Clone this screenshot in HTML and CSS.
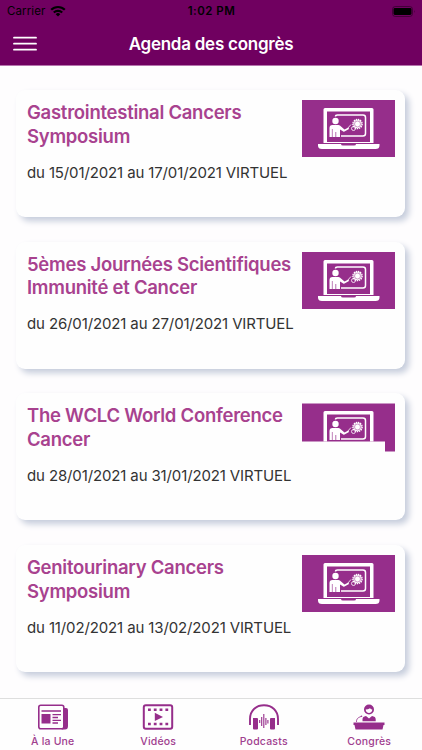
FILE: index.html
```
<!DOCTYPE html>
<html lang="fr">
  <head>
    <title>Agenda des congrès</title>
    <meta charset="UTF-8">
    <link rel="stylesheet" href="styles.css">
  </head>
  <body>
    <!-- shared laptop picture -->
    <svg class="sprite" width="0" height="0">
      <symbol id="laptop" viewBox="0 0 93 57">
        <path fill="#fff" fill-rule="evenodd" d="M23 8h47q1.500 0 1.500 1.500V43h-50V9.500Q21.500 8 23 8zM25 11.500V42h43V11.500z"/>
        <path fill="#fff" d="M16 44h23q0 1.500 2 1.500h11q2 0 2-1.500h23.500v1.500q0 3.500-4 3.500h-53.500Q16 49 16 45.500z"/>
        <path fill="none" stroke="#fff" stroke-width="1.500" d="M33.500 16.500q0-1.500 2-1.500H61q2.500 0 2.500 2.500v16q0 2.500-2.500 2.500H39"/>
        <circle cx="33.500" cy="21" r="3.200" fill="#fff"/>
        <path fill="#fff" d="M30.500 25h6q1.500 0 2.500 1.500l3.500 3 4-2 .5 1.500-4.500 2.500q-1 .5-2-.5L38 29.500v7.500h-3.800V32h-.7v5h-3V29h-.6v8H27.500V28q0-3 3-3z"/>
        <path stroke="#fff" stroke-width=".8" d="M45 29l4-4.500"/>
        <circle cx="55.500" cy="24" r="4.200" fill="#fff"/>
        <circle cx="55.500" cy="24" r="4.700" fill="none" stroke="#fff" stroke-width="1.200" stroke-dasharray="1.400 .8"/>
        <circle cx="55.500" cy="24" r="3" fill="none" stroke="#962e8b" stroke-width=".5"/>
        <circle cx="51.500" cy="28.500" r="2" fill="none" stroke="#fff" stroke-width=".8"/>
      </symbol>
    </svg>

    <header>
      <div class="statusBar">
        <div class="carrier">
          <span>Carrier</span>
          <svg width="16" height="12" viewBox="0 0 16 12">
            <path fill="none" stroke="#000" stroke-width="2.200" d="M1.200 4.800a9.600 9.600 0 0 1 13.600 0M3.800 7.500a6 6 0 0 1 8.400 0"/>
            <path d="M8 11.500L5.700 9.200a3.300 3.300 0 0 1 4.600 0z"/>
          </svg>
        </div>
        <div class="time">1:02 PM</div>
        <svg class="battery" width="24" height="11" viewBox="0 0 24 11">
          <rect x=".5" y=".5" width="20" height="10" rx="2.800" fill="none" stroke="#000" stroke-opacity=".4"/>
          <rect x="1.500" y="2" width="18" height="7" rx="1.400"/>
          <path fill-opacity=".4" d="M22 4q1.500 1.500 0 3z"/>
        </svg>
      </div>
      <div class="navBar">
        <svg class="menu" width="24" height="16" viewBox="0 0 24 16">
          <path stroke="#fff" stroke-width="1.800" stroke-linecap="round" d="M1 1.700h22M1 7.700h22M1 13.700h22"/>
        </svg>
        <h1>Agenda des congrès</h1>
      </div>
    </header>

    <main class="agenda">
      <article class="card">
        <div class="cardText">
          <h2>Gastrointestinal Cancers<br>Symposium</h2>
          <p>du 15/01/2021 au 17/01/2021 VIRTUEL</p>
        </div>
        <svg class="picture" width="93" height="57"><use href="#laptop"/></svg>
      </article>

      <article class="card">
        <div class="cardText">
          <h2>5èmes Journées Scientifiques<br>Immunité et Cancer</h2>
          <p>du 26/01/2021 au 27/01/2021 VIRTUEL</p>
        </div>
        <svg class="picture" width="93" height="57"><use href="#laptop"/></svg>
      </article>

      <article class="card">
        <div class="cardText">
          <h2>The WCLC World Conference<br>Cancer</h2>
          <p>du 28/01/2021 au 31/01/2021 VIRTUEL</p>
        </div>
        <svg class="picture cut" width="93" height="57"><use href="#laptop"/></svg>
      </article>

      <article class="card">
        <div class="cardText">
          <h2>Genitourinary Cancers<br>Symposium</h2>
          <p>du 11/02/2021 au 13/02/2021 VIRTUEL</p>
        </div>
        <svg class="picture" width="93" height="57"><use href="#laptop"/></svg>
      </article>
    </main>

    <nav class="tabBar">
      <a class="tab">
        <svg width="32" height="26" viewBox="0 0 32 26">
          <rect x="1.800" y="1.300" width="25" height="23.400" rx="2" fill="none" stroke="#962e8b" stroke-width="1.600"/>
          <path fill="#962e8b" d="M27 4h2q2 0 2 2v16q0 3.500-3 3.500h-4q3-1 3-4z"/>
          <path fill="#962e8b" d="M4.500 10h9v9.500h-9z"/>
          <path stroke="#962e8b" stroke-width="1.300" d="M4.500 7H24M15.500 10.700H24M15.500 13.500h5.500M15.500 16.300H24M15.500 19h5.500"/>
        </svg>
        <span>À la Une</span>
      </a>
      <a class="tab">
        <svg width="32" height="26" viewBox="0 0 32 26">
          <rect x="1.800" y="1.300" width="28.400" height="23.400" rx="2" fill="none" stroke="#962e8b" stroke-width="2"/>
          <path stroke="#962e8b" stroke-width="2.500" stroke-dasharray="2.800 3" d="M6 5.800h21M6 20h21"/>
          <path fill="#962e8b" d="M12.800 8.700l8.200 4.200-8.200 4.200z"/>
        </svg>
        <span>Vidéos</span>
      </a>
      <a class="tab">
        <svg width="32" height="26" viewBox="0 0 32 26">
          <path fill="none" stroke="#962e8b" stroke-width="1.900" d="M2 21v-6C2 6.500 8 1.300 16 1.300S30 6.500 30 15v6"/>
          <path fill="#962e8b" d="M5 14h4q1 0 1 1v9.500q0 1-1 1H6q-1 0-1-1zM27 14h-4q-1 0-1 1v9.500q0 1 1 1h3q1 0 1-1z"/>
          <path stroke="#962e8b" stroke-width="1.100" d="M11.700 16v3M13.700 13v9M15.800 10v14M17.900 14v7M19.900 16v3.500"/>
        </svg>
        <span>Podcasts</span>
      </a>
      <a class="tab">
        <svg width="32" height="26" viewBox="0 0 32 26">
          <circle cx="16" cy="5.500" r="5" fill="#962e8b"/>
          <path fill="#fff" d="M12.700 5.500q2.500 0 4.300-1.200 1 1.200 2.300 1.200c0 4.500-6.600 4.500-6.600 0z"/>
          <path fill="#962e8b" d="M9.500 17.300v-2q0-2.800 3.500-3.300l3 2.500 3-2.500q3.700.5 3.700 3.300v2z"/>
          <path fill="none" stroke="#962e8b" stroke-width=".8" d="M3.500 18q-.5-4 4.500-5.500"/>
          <circle cx="8.500" cy="12.300" r=".8" fill="#962e8b"/>
          <path fill="#962e8b" d="M.5 18.500h31v2.500H30.500l-1 4.500h-27L1.500 21H.5z"/>
        </svg>
        <span>Congrès</span>
      </a>
    </nav>
  </body>
</html>
```
FILE: styles.css
```
* {
  box-sizing: border-box;
  margin: 0;
}

body {
  display: flex;
  flex-direction: column;
  height: 750px;
  overflow: hidden;
  font-family: Inter, Roboto, "Liberation Sans", sans-serif;
  background-color: #fefdfe;
}

svg {
  display: block;
  flex-shrink: 0;
}

.sprite {
  position: absolute;
}

header {
  flex: none;
  height: 66px;
  background-color: #700060;
  border-bottom: 1px solid #b574ad;
}

.statusBar {
  display: grid;
  grid-template-columns: 1fr auto 1fr;
  align-items: center;
  height: 22px;
  padding: 0 6px 0 7px;
  font-size: 11.5px;
}

.carrier {
  display: flex;
  align-items: center;
  gap: 5px;
  letter-spacing: 0.100px;
}

.time {
  font-weight: 600;
  letter-spacing: 0.500px;
}

.battery {
  justify-self: end;
}

.navBar {
  display: grid;
  grid-template-columns: 24px 1fr 24px;
  align-items: center;
  height: 43px;
  padding: 0 13px;
}

.navBar h1 {
  color: white;
  font-size: 17px;
  font-weight: 600;
  letter-spacing: -0.250px;
  text-align: center;
}

.agenda {
  flex: 1;
  display: flex;
  flex-direction: column;
  gap: 24.700px;
  padding: 24px 17px 0 16px;
}

.card {
  display: flex;
  flex: none;
  justify-content: space-between;
  height: 127px;
  padding: 10px 10px 0 11px;
  background-color: #fefefe;
  border-radius: 9px;
  box-shadow: 4px 4px 6px #c5ccdb;
}

.cardText {
  width: 275px;
  margin-right: -10px;
  padding-top: 1px;
  white-space: nowrap;
}

.card h2 {
  color: #a8428f;
  font-size: 18.500px;
  font-weight: 600;
  line-height: 23.500px;
  letter-spacing: -0.260px;
}

.card p {
  margin-top: 14.500px;
  color: #333;
  font-size: 15px;
  line-height: 20px;
  letter-spacing: -0.130px;
}

.picture {
  background-color: #962e8b;
}

/* picture still loading, bottom strip missing */
.cut {
  clip-path: polygon(0 0, 100% 0, 100% 48px, 83px 48px, 83px 38px, 0 38px);
}

.tabBar {
  display: flex;
  flex: none;
  height: 52px;
  background-color: #fefefe;
  border-top: 1px solid #dedede;
}

.tab {
  display: flex;
  flex: 1;
  flex-direction: column;
  align-items: center;
  gap: 5px;
  padding-top: 5px;
  color: #a0408f;
  font-size: 10.500px;
  font-weight: 500;
  line-height: 14px;
  letter-spacing: 0.200px;
}
```
